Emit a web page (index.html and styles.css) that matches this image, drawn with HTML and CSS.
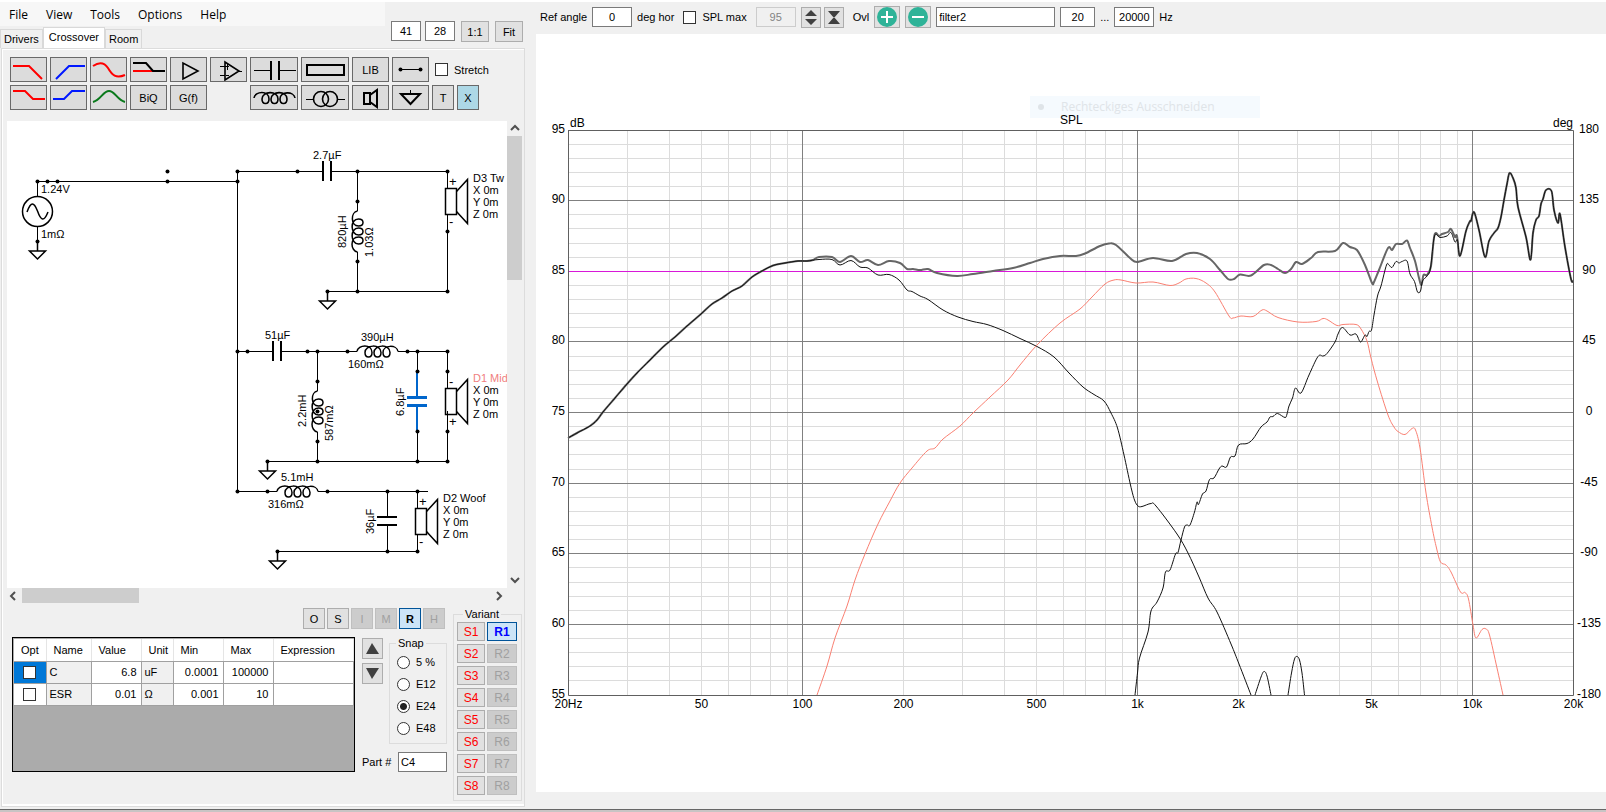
FILE: index.html
```html
<!DOCTYPE html>
<html lang="en">
<head>
    <meta charset="UTF-8">
    <meta name="viewport" content="width=device-width, initial-scale=1.0">
    <title>Crossover</title>
    <link rel="stylesheet" href="styles.css">
</head>
<body>
    <svg class="defs" width="0" height="0">
        <defs>
            <path id="coil" d="M0 0C1 -7 15 -8 15 1C15 7 8 7 8 1C8 -7 24 -8 24 1C24 7 17 7 17 1C17 -7 33 -8 33 1C33 7 26 7 26 1C26 -7 40 -7 41 0"/>
            <path id="ground" d="M0 0V10M-8 10H8L0 18Z"/>
            <g id="speaker">
                <rect x="-2" y="17" width="11" height="26"/>
                <path d="M9 20L20 8V52L9 40"/>
            </g>
        </defs>
    </svg>

    <div class="app">
        <section class="left">
            <header class="top">
                <div class="nav">
                    <nav class="menu">
                        <a href="#">File</a>
                        <a href="#">View</a>
                        <a href="#">Tools</a>
                        <a href="#">Options</a>
                        <a href="#">Help</a>
                    </nav>
                    <div class="tabs">
                        <button class="tab">Drivers</button>
                        <button class="tab active">Crossover</button>
                        <button class="tab">Room</button>
                    </div>
                </div>
                <div class="grid-size">
                    <input type="text" value="41" aria-label="Columns">
                    <input type="text" value="28" aria-label="Rows">
                    <button class="btn">1:1</button>
                    <button class="btn">Fit</button>
                </div>
            </header>

            <main class="page">
                <div class="tools">
                    <button class="tool" aria-label="Low pass"><svg width="35" height="23"><path class="red" d="M2 8H18L31 21"/></svg></button>
                    <button class="tool" aria-label="High pass"><svg width="35" height="23"><path class="blue" d="M5 21L18 8H34"/></svg></button>
                    <button class="tool" aria-label="Phase"><svg width="35" height="23"><path class="red" d="M2 8C8 4 13 4 17 10C21 17 25 21 34 17"/></svg></button>
                    <button class="tool" aria-label="Shelf"><svg width="35" height="23"><path class="red" d="M2 13H22"/><path class="ink2" d="M2 5H15L22 13H34"/></svg></button>
                    <button class="tool" aria-label="Buffer"><svg width="35" height="23"><path class="ink" d="M12 5V21L27 13Z"/></svg></button>
                    <button class="tool" aria-label="Op amp"><svg width="35" height="23"><path class="ink" d="M14 4V22L28 13Z"/><path class="thin" d="M9 8.5H18M9 17.5H14M28 13.5H31M16.5 6V12M15 17.5H18"/></svg></button>
                    <button class="tool" aria-label="Capacitor"><svg width="46" height="23"><path class="thin" d="M3 12.5H20M28 12.5H45"/><path class="ink2" d="M20 3V22M28 3V22"/></svg></button>
                    <button class="tool" aria-label="Resistor"><svg width="46" height="23"><rect class="ink2" x="5" y="7" width="37" height="10"/></svg></button>
                    <button class="tool">LIB</button>
                    <button class="tool" aria-label="Wire"><svg width="35" height="23"><path class="thin" d="M7 11.5H28"/><circle cx="7.5" cy="11.5" r="2"/><circle cx="27.5" cy="11.5" r="2"/></svg></button>
                    <label class="check stretch"><input type="checkbox">Stretch</label>

                    <button class="tool" aria-label="Low shelf"><svg width="35" height="23"><path class="red" d="M2 5H14L22 13H34"/></svg></button>
                    <button class="tool" aria-label="High shelf"><svg width="35" height="23"><path class="blue" d="M2 13H13L21 5H34"/></svg></button>
                    <button class="tool" aria-label="Peak"><svg width="35" height="23"><path class="green" d="M2 16C10 14 12 5 18 5C24 5 26 14 34 16"/></svg></button>
                    <button class="tool">BiQ</button>
                    <button class="tool">G(f)</button>
                    <button class="tool coil-tool" aria-label="Inductor"><svg width="46" height="23"><g class="ink"><use href="#coil" x="3" y="12"/></g></svg></button>
                    <button class="tool" aria-label="Transformer"><svg width="46" height="23"><circle class="ink" cx="19" cy="13" r="7.5"/><circle class="ink" cx="28" cy="13" r="7.5"/><path class="thin" d="M4 13.5H12M35 13.5H43"/></svg></button>
                    <button class="tool" aria-label="Speaker"><svg width="35" height="23"><path class="ink2" d="M11 7H17V18H11ZM17 9L24 4V21L17 16"/></svg></button>
                    <button class="tool" aria-label="Ground"><svg width="35" height="23"><path class="thin" d="M17.5 4V8"/><path class="ink2" d="M8 8H27L17.5 18Z"/></svg></button>
                    <button class="tool">T</button>
                    <button class="tool on">X</button>
                </div>

                <div class="canvas">
                    <svg class="schematic" viewBox="7 121 500 467">
                        <g class="wire">
                            <path d="M37.5 196V181.5H237.5M37.5 227V241.5M237.5 171.5V491.5"/>
                            <path d="M237.5 171.5H323M331 171.5H447.5V188M447.5 214V291.5H327.5M357.5 171.5V211M357.5 252V291.5"/>
                            <path d="M237.5 351.5H273M281 351.5H357M398 351.5H447.5V388M447.5 411V461.5H267.5M317.5 351.5V391M317.5 432V461.5M417.5 351.5V372M417.5 432V461.5"/>
                            <path d="M237.5 491.5H277M318 491.5H428M387.5 491.5V517M387.5 525V551.5M417.5 491.5V508M417.5 534V551.5H277.5"/>
                        </g>
                        <g class="plates">
                            <path d="M323 161V181M331 161V181M273 341V361M281 341V361M377 517H397M377 525H397"/>
                        </g>
                        <g class="selected">
                            <path d="M417 372V397M417 406V431"/>
                            <path class="plate" d="M407 397.5H427M407 405.5H427"/>
                        </g>
                        <g class="part">
                            <circle cx="37.5" cy="211.5" r="15"/>
                            <path d="M27 212C31 201 34 202 37.5 211C41 221 44 222 48 212"/>
                            <use href="#ground" x="37.5" y="241"/>
                            <use href="#ground" x="327.5" y="291"/>
                            <use href="#ground" x="267.5" y="461"/>
                            <use href="#ground" x="277.5" y="551"/>
                            <use href="#coil" transform="translate(357.5 252) rotate(-90)"/>
                            <use href="#coil" transform="translate(317.5 432) rotate(-90)"/>
                            <use href="#coil" x="357" y="351.5"/>
                            <use href="#coil" x="277" y="491.5"/>
                            <use href="#speaker" x="447.5" y="171.5"/>
                            <use href="#speaker" x="447.5" y="371.5"/>
                            <use href="#speaker" x="417.5" y="491.5"/>
                        </g>
                        <g id="dots"></g>
                        <g class="names">
                            <text x="41" y="193">1.24V</text>
                            <text x="41" y="238">1mΩ</text>
                            <text x="313" y="159">2.7µF</text>
                            <text transform="translate(346 248) rotate(-90)">820µH</text>
                            <text transform="translate(373 257) rotate(-90)">1.03Ω</text>
                            <text x="265" y="339">51µF</text>
                            <text x="361" y="341">390µH</text>
                            <text x="348" y="368">160mΩ</text>
                            <text transform="translate(306 427) rotate(-90)">2.2mH</text>
                            <text transform="translate(333 441) rotate(-90)">587mΩ</text>
                            <text transform="translate(404 416) rotate(-90)">6.8µF</text>
                            <text x="281" y="481">5.1mH</text>
                            <text x="268" y="508">316mΩ</text>
                            <text transform="translate(374 534) rotate(-90)">36µF</text>
                            <text x="473" y="182">D3 Tw</text>
                            <text x="473" y="194">X 0m</text>
                            <text x="473" y="206">Y 0m</text>
                            <text x="473" y="218">Z 0m</text>
                            <text class="mid" x="473" y="382">D1 Mid</text>
                            <text x="473" y="394">X 0m</text>
                            <text x="473" y="406">Y 0m</text>
                            <text x="473" y="418">Z 0m</text>
                            <text x="443" y="502">D2 Woof</text>
                            <text x="443" y="514">X 0m</text>
                            <text x="443" y="526">Y 0m</text>
                            <text x="443" y="538">Z 0m</text>
                        </g>
                        <g class="names poles">
                            <text x="449" y="186">+</text>
                            <text x="449" y="226">-</text>
                            <text x="449" y="386">-</text>
                            <text x="449" y="426">+</text>
                            <text x="419" y="506">+</text>
                            <text x="419" y="546">-</text>
                        </g>
                    </svg>
                    <div class="vscroll">
                        <svg width="15" height="15"><path d="M4 9L8 5L12 9"/></svg>
                        <div class="thumb"></div>
                        <svg width="15" height="15"><path d="M4 5L8 9L12 5"/></svg>
                    </div>
                    <div class="hscroll">
                        <svg width="15" height="15"><path d="M8 4L4 8L8 12"/></svg>
                        <div class="thumb"></div>
                        <svg width="15" height="15"><path d="M5 4L9 8L5 12"/></svg>
                    </div>
                </div>

                <div class="bottom">
                    <div class="params">
                        <div class="modes">
                            <button class="btn">O</button>
                            <button class="btn">S</button>
                            <button class="btn" disabled>I</button>
                            <button class="btn" disabled>M</button>
                            <button class="btn on">R</button>
                            <button class="btn" disabled>H</button>
                        </div>
                        <div class="row">
                            <div class="sheet">
                                <table>
                                    <thead>
                                        <tr>
                                            <th class="c-opt">Opt</th>
                                            <th class="c-name">Name</th>
                                            <th class="c-num">Value</th>
                                            <th class="c-opt">Unit</th>
                                            <th class="c-num">Min</th>
                                            <th class="c-num">Max</th>
                                            <th>Expression</th>
                                        </tr>
                                    </thead>
                                    <tbody>
                                        <tr>
                                            <td class="opt current"><input type="checkbox" aria-label="Optimize C"></td>
                                            <td class="fixed">C</td>
                                            <td class="num">6.8</td>
                                            <td class="fixed">uF</td>
                                            <td class="num">0.0001</td>
                                            <td class="num">100000</td>
                                            <td></td>
                                        </tr>
                                        <tr>
                                            <td class="opt"><input type="checkbox" aria-label="Optimize ESR"></td>
                                            <td class="fixed">ESR</td>
                                            <td class="num">0.01</td>
                                            <td class="fixed">Ω</td>
                                            <td class="num">0.001</td>
                                            <td class="num">10</td>
                                            <td></td>
                                        </tr>
                                    </tbody>
                                </table>
                            </div>
                            <div class="side">
                                <div class="side-top">
                                    <div class="steps">
                                        <button class="btn" aria-label="Increase"><svg width="15" height="13"><path d="M7 1L14 12H1Z"/></svg></button>
                                        <button class="btn" aria-label="Decrease"><svg width="15" height="13"><path d="M7 12L14 1H1Z"/></svg></button>
                                    </div>
                                    <fieldset class="snap">
                                        <legend>Snap</legend>
                                        <label><input type="radio" name="snap">5 %</label>
                                        <label><input type="radio" name="snap">E12</label>
                                        <label><input type="radio" name="snap" checked>E24</label>
                                        <label><input type="radio" name="snap">E48</label>
                                    </fieldset>
                                </div>
                                <div class="part-no">
                                    <label for="part">Part #</label>
                                    <input type="text" id="part" value="C4">
                                </div>
                            </div>
                        </div>
                    </div>
                    <fieldset class="variant">
                        <legend>Variant</legend>
                        <button class="btn save">S1</button><button class="btn on recall">R1</button>
                        <button class="btn save">S2</button><button class="btn" disabled>R2</button>
                        <button class="btn save">S3</button><button class="btn" disabled>R3</button>
                        <button class="btn save">S4</button><button class="btn" disabled>R4</button>
                        <button class="btn save">S5</button><button class="btn" disabled>R5</button>
                        <button class="btn save">S6</button><button class="btn" disabled>R6</button>
                        <button class="btn save">S7</button><button class="btn" disabled>R7</button>
                        <button class="btn save">S8</button><button class="btn" disabled>R8</button>
                    </fieldset>
                </div>
            </main>
        </section>

        <section class="right">
            <div class="plot-bar">
                <label for="angle">Ref angle</label>
                <input type="text" id="angle" class="w-num" value="0">
                <span class="unit">deg hor</span>
                <label class="check"><input type="checkbox">SPL max</label>
                <input type="text" class="w-num" value="95" aria-label="SPL max value" disabled>
                <div class="pair">
                    <button class="btn" aria-label="Expand"><svg width="18" height="19"><path d="M9 2L15 8H3ZM9 17L15 11H3Z"/></svg></button>
                    <button class="btn" aria-label="Compress"><svg width="18" height="19"><path d="M9 10L15 3H3ZM9 9L15 16H3Z"/></svg></button>
                </div>
                <span>Ovl</span>
                <div class="overlay">
                    <button class="btn" aria-label="Add overlay"><svg width="24" height="20"><circle cx="12" cy="10" r="10"/><path d="M6 10H18M12 4V16"/></svg></button>
                    <button class="btn" aria-label="Remove overlay"><svg width="24" height="20"><circle cx="12" cy="10" r="10"/><path d="M6 10H18"/></svg></button>
                </div>
                <input type="text" class="w-name" value="filter2" aria-label="Overlay name">
                <input type="text" class="w-from" value="20" aria-label="From frequency">
                <span>...</span>
                <input type="text" class="w-num" value="20000" aria-label="To frequency">
                <span>Hz</span>
            </div>
            <div class="plot">
                <svg id="spl" viewBox="536 34 1070 758">
                    <g class="ghost">
                        <rect x="1030" y="96" width="230" height="22"/>
                        <circle cx="1041" cy="107" r="3"/>
                        <text x="1061" y="111">Rechteckiges Ausschneiden</text>
                    </g>
                    <g id="grid"></g>
                    <path class="target" d="M569 271.5H1573"/>
                    <g id="curves"></g>
                    <path class="frame" d="M568.5 130V695.5H1573.5V130.5H568.5"/>
                    <g id="labels">
                        <text x="570" y="127">dB</text>
                        <text x="1060" y="124">SPL</text>
                        <text x="1553" y="127">deg</text>
                    </g>
                </svg>
            </div>
        </section>
    </div>
    <footer class="strip"></footer>

    <script>
        const NS = "http://www.w3.org/2000/svg";

        function add(parent, tag, attrs, text) {
            let el = document.createElementNS(NS, tag);
            for (let key in attrs) {
                el.setAttribute(key, attrs[key]);
            }
            if (text !== undefined) {
                el.textContent = text;
            }
            parent.appendChild(el);
        }

        // wire nodes
        let nodes = [
            [37.5, 181.5], [47.5, 181.5], [57.5, 181.5], [167.5, 171.5], [167.5, 181.5], [237.5, 171.5], [237.5, 181.5],
            [37.5, 241.5], [297.5, 171.5], [357.5, 171.5], [447.5, 171.5], [357.5, 201.5], [357.5, 261.5], [447.5, 231.5],
            [327.5, 291.5], [357.5, 291.5], [447.5, 291.5], [237.5, 351.5], [247.5, 351.5], [307.5, 351.5], [317.5, 351.5],
            [347.5, 351.5], [407.5, 351.5], [417.5, 351.5], [447.5, 351.5], [317.5, 381.5], [317.5, 411.5], [317.5, 441.5],
            [417.5, 371.5], [417.5, 431.5], [447.5, 371.5], [447.5, 431.5], [267.5, 461.5], [317.5, 461.5], [417.5, 461.5],
            [447.5, 461.5], [237.5, 491.5], [267.5, 491.5], [327.5, 491.5], [387.5, 491.5], [417.5, 491.5],
            [277.5, 551.5], [387.5, 551.5], [417.5, 551.5]
        ];
        nodes.forEach(n => add(document.getElementById("dots"), "circle", { cx: n[0], cy: n[1], r: 2 }));

        // log frequency axis and dB axis
        let xOf = f => Math.floor(802.5 + 335 * Math.log10(f / 100)) + 0.5;
        let yOf = db => Math.floor(130 + (95 - db) * 14.125) + 0.5;
        let grid = document.getElementById("grid");
        let labels = document.getElementById("labels");
        let minor = "", major = "";

        for (let db = 94; db > 55; db--) {
            let line = "M568 " + yOf(db) + "H1573";
            if (db % 5 === 0) major += line; else minor += line;
        }
        for (let decade of [10, 100, 1000, 10000]) {
            for (let n = 1; n < 10; n++) {
                let f = n * decade;
                if (f <= 20 || f >= 20000) continue;
                let line = "M" + xOf(f) + " 130V695";
                if (n === 1) major += line; else minor += line;
            }
        }
        add(grid, "path", { class: "minor", d: minor });
        add(grid, "path", { class: "major", d: major });

        for (let db = 95; db >= 55; db -= 5) {
            add(labels, "text", { x: 565, y: yOf(db) + 2, class: "end" }, db);
            add(labels, "text", { x: 1589, y: yOf(db) + 2, class: "mid" }, (db - 75) * 9);
        }
        let ticks = [[20, "20Hz"], [50, "50"], [100, "100"], [200, "200"], [500, "500"], [1000, "1k"], [2000, "2k"], [5000, "5k"], [10000, "10k"], [20000, "20k"]];
        ticks.forEach(t => add(labels, "text", { x: xOf(t[0]), y: 708, class: "mid" }, t[1]));

        // measured curves, plot coordinates
        let low = [568,438, 577,433, 590,426, 597,420, 603,412, 615,398, 627,384, 637,373, 650,360, 663,347, 675,337, 687,326, 701,314, 712,304, 722,298, 732,291, 742,286, 752,277, 762,271, 773,265.5, 785,263, 798,261, 807,261];
        let high = [1460,256, 1466,231, 1470,221, 1471,221, 1474,212, 1479,230, 1485,257, 1489,241, 1494,233, 1498,228, 1501,217, 1504,200, 1507,184, 1509.5,173, 1513,178, 1516,188, 1518,207, 1526,237, 1530.5,260, 1533,233, 1536,220, 1539,216, 1541,204, 1543,199, 1546,190, 1551.5,191, 1554,210, 1558,223, 1560,214, 1565,247, 1571,279, 1573,281];
        let curves = {
            sum: low.concat([813,260, 819,257, 832,257, 840,262, 851,256, 860,262, 868,260, 878,265, 889,261, 900,263, 907,269, 913,269, 920,270, 928,269, 937,273, 957,276, 973,274, 993,271, 1013,268, 1030,263, 1043,259, 1060,256, 1076,256, 1085,253.5, 1100,246, 1109,243.5, 1116,245, 1130,258, 1137,262, 1153,258, 1172,261, 1186,254, 1197,253, 1210,259, 1220,270, 1228,279, 1234,279, 1240,274.5, 1251,275.5, 1264,265, 1271,265, 1278,269, 1285,273, 1291,269, 1296,262, 1302,264, 1311,258, 1318,252, 1335,251, 1343,243, 1350,247, 1357,250, 1365,265, 1372,283, 1374,282, 1379,270, 1388,248, 1392,250, 1396,244, 1402,244, 1407,240.5, 1410,248, 1415,261, 1419,278, 1421.5,285, 1423.5,275, 1427,275, 1431,266, 1434.5,235, 1439,236, 1442,234, 1448,232, 1451,229, 1455,237, 1457,236]).concat(high),
            woofer: low.concat([819,259.5, 832,259.5, 840,265, 851,260.5, 860,267, 868,268, 878,275, 889,274.5, 899,280, 907,290, 912,291.5, 920,296, 928,299.5, 943,310, 958,317, 973,321.5, 987,324.5, 1003,330.5, 1020,338.5, 1037,346.5, 1054,357, 1069,373, 1083,387, 1094,394.5, 1104,401, 1111,413, 1117.5,428, 1124,455, 1130.5,485, 1134.5,500, 1138,506, 1142,506.5, 1151,503.5, 1156,506, 1177,534, 1188,553, 1199,577, 1208,598, 1217,612, 1231,644, 1239,664, 1251,695]),
            mid: [817,695, 827,666, 835,638, 847,606, 855,580, 865,554, 878,524, 890,501, 900,483, 912,468, 927,451, 935,448, 943,439, 960,426, 973,413, 990,397, 1008,380, 1020,365, 1037,345, 1060,323, 1080,309, 1092,297, 1105,284, 1114,280, 1121,280, 1136,283, 1153,282, 1170,285.5, 1179,283, 1186,279, 1196,278.5, 1206,283, 1215,292, 1229,316, 1233,318, 1241,316, 1253,316.5, 1262,310, 1267,311, 1278,317.5, 1298,322, 1316,321.5, 1323,318.5, 1328,320, 1337,325.5, 1343,324.5, 1356,324.5, 1361,329, 1367,341, 1371,358, 1377.5,382, 1388,415, 1394,427, 1398,431.5, 1405,434.5, 1412,428.5, 1415.5,430, 1420,448, 1426,493, 1432,527, 1436.5,548, 1440.5,562, 1446,565, 1451,572, 1460.5,592, 1465,592.5, 1468.5,599, 1473,625, 1476,638, 1482,629.5, 1486,629, 1489.5,635, 1497,668, 1503,695],
            tweeter: [1135,695, 1137.5,673, 1139.5,658, 1148,632, 1151,611, 1157,602, 1163,588, 1165.5,572, 1170,570, 1175.5,554, 1178,552.5, 1181,540, 1184.5,527, 1187,525, 1190,525, 1194.5,512, 1197,502, 1198.5,504.5, 1202.5,494, 1206,491, 1209.5,479.5, 1214,478, 1219,469, 1222,466, 1226.5,467, 1230.5,457, 1235,456, 1238.5,445, 1247,443.5, 1253,439, 1261,427, 1267,422, 1270,417, 1273,416.5, 1277.5,413.5, 1285,417.5, 1287,414, 1289,406, 1292.5,398, 1295.5,388, 1301,393, 1309,375, 1318,356.5, 1323,356, 1327,353.5, 1335,342, 1338,334, 1342.5,327.5, 1350,335, 1356,334, 1360.5,342, 1365,335, 1367,336.5, 1369,331.5, 1371.5,330, 1374,315, 1377.5,296, 1381,286, 1386.5,265, 1389,265, 1392,267.5, 1396,261.5, 1399,263, 1402,261.5, 1407,261, 1410,274, 1414.5,281.5, 1417.5,292, 1420.5,291, 1422.5,281, 1427,276, 1430.5,268, 1434.5,236, 1440,237.5, 1447,236, 1451,232.5, 1455,242, 1457.5,240].concat(high),
            bump1: [1255,695, 1261,677, 1264,671.5, 1267,676, 1271,695],
            bump2: [1288,695, 1291.5,673, 1294.5,659, 1297,656.5, 1299.5,660, 1302,673, 1304.5,695]
        };

        function smooth(p) {
            let d = "M" + p[0] + " " + p[1];
            for (let i = 0; i + 3 < p.length; i += 2) {
                let a = Math.max(i - 2, 0), b = Math.min(i + 4, p.length - 2);
                d += "C" + [
                    p[i] + (p[i + 2] - p[a]) / 6, p[i + 1] + (p[i + 3] - p[a + 1]) / 6,
                    p[i + 2] - (p[b] - p[i]) / 6, p[i + 3] - (p[b + 1] - p[i + 1]) / 6,
                    p[i + 2], p[i + 3]
                ].join(" ");
            }
            return d;
        }
        for (let name in curves) {
            add(document.getElementById("curves"), "path", { class: "curve " + name, d: smooth(curves[name]) });
        }
    </script>
</body>
</html>
```
FILE: styles.css
```css
* {
    box-sizing: border-box;
}
body {
    margin: 0;
    min-height: 100vh;
    display: flex;
    flex-direction: column;
    background: #f0f0f0;
    border-top: 2px solid #fff;
    font-family: "Liberation Sans", Arial, sans-serif;
    font-size: 11px;
    color: #000;
}
.defs {
    position: absolute;
}
button, input, legend {
    font: inherit;
    color: inherit;
}
button, input[type="text"] {
    margin: 0;
    padding: 0;
}
input[type="text"] {
    height: 20px;
    background: #fff;
    border: 1px solid #7a7a7a;
    text-align: center;
}
input[type="text"]:disabled {
    color: #838383;
    background: #f0f0f0;
    border-color: #ccc;
}
input[type="checkbox"] {
    appearance: none;
    width: 13px;
    height: 13px;
    margin: 0;
    background: #fff;
    border: 1px solid #333;
}
.check {
    display: flex;
    align-items: center;
    gap: 6px;
}
.app {
    display: flex;
    flex: 1;
}

/* left pane */
.left {
    flex: 0 0 525px;
    display: flex;
    flex-direction: column;
}
.top {
    display: flex;
    justify-content: space-between;
    height: 46px;
}
.nav {
    flex: 0 0 385px;
    display: flex;
    flex-direction: column;
    justify-content: space-between;
}
.menu {
    display: flex;
    align-items: center;
    gap: 18px;
    height: 24px;
    padding-left: 9px;
    background: #f7f7f7;
    font-family: "Open Sans", sans-serif;
    font-size: 12px;
}
.menu a {
    color: #000;
    text-decoration: none;
}
.tabs {
    display: flex;
    align-items: flex-end;
}
.tab {
    height: 19px;
    padding: 0 3px;
    background: #f0f0f0;
    border: 1px solid #d9d9d9;
    border-bottom: 0;
}
.tab.active {
    height: 21px;
    padding: 0 5px 2px;
    background: #fff;
}
.grid-size {
    display: flex;
    gap: 4px;
    align-items: flex-start;
    padding: 19px 2px 0 0;
}
.grid-size input {
    width: 30px;
}
.grid-size .btn {
    width: 28px;
    height: 21px;
    margin-left: 2px;
}
.btn {
    display: flex;
    align-items: center;
    justify-content: center;
    background: #e1e1e1;
    border: 1px solid #adadad;
}
.btn:disabled {
    color: #a0a0a0;
    background: #ccc;
    border-color: #bfbfbf;
}
.btn.on {
    background: #cce4f7;
    border-color: #005499;
    font-weight: bold;
}
.page {
    flex: 1;
    margin: 0 0 2px 1px;
    padding: 8px 2px 0 5px;
    border: 1px solid #dcdcdc;
    box-shadow: inset 1px 1px #fff, inset 0 -2px #fff;
}
.tools {
    display: grid;
    grid-template-columns: repeat(6, 37px) repeat(2, 48px) repeat(2, 37px) 22px 22px 1fr;
    grid-auto-rows: 25px;
    gap: 3px;
    padding-left: 3px;
}
.tool {
    display: flex;
    align-items: center;
    justify-content: center;
    background: #dcdcdc;
    border: 1px solid #696969;
}
.tool.on {
    background: #add8e6;
}
.tool svg {
    fill: none;
}
.tool circle {
    fill: #000;
}
.tool circle.ink {
    fill: none;
}
.stretch {
    grid-column: 11 / -1;
    padding-left: 3px;
}
.coil-tool {
    grid-column: 7;
}
.red, .blue, .green, .ink2 {
    stroke-width: 2;
}
.red {
    stroke: #f00;
}
.blue {
    stroke: #0018ff;
}
.green {
    stroke: #0a7a1c;
}
.ink, .ink2, .thin {
    stroke: #000;
}
.ink {
    stroke-width: 1.6;
}

/* schematic */
.canvas {
    display: grid;
    grid-template-columns: 1fr 15px;
    margin-top: 11px;
}
.schematic {
    display: block;
    width: 100%;
    background: #fff;
    fill: none;
    stroke: #000;
}
.plates {
    stroke-width: 2;
}
.part {
    stroke-width: 1.5;
}
.selected {
    stroke: #0066cc;
    stroke-width: 2;
}
.plate {
    stroke-width: 3;
}
#dots {
    fill: #000;
    stroke: none;
}
.names {
    fill: #000;
    stroke: none;
}
.names .mid {
    fill: #f08080;
}
.poles {
    font-size: 13px;
}
.vscroll, .hscroll {
    display: flex;
    justify-content: space-between;
    fill: none;
    stroke: #505050;
    stroke-width: 2;
}
.vscroll {
    flex-direction: column;
}
.thumb {
    background: #cdcdcd;
}
.vscroll .thumb {
    height: 144px;
    margin-bottom: auto;
}
.hscroll .thumb {
    width: 117px;
    margin-right: auto;
}

/* part parameters */
.bottom {
    display: flex;
    justify-content: space-between;
    padding: 5px 0 0 5px;
}
.modes {
    display: flex;
    justify-content: flex-end;
    gap: 2px;
    padding-right: 2px;
}
.modes .btn {
    width: 22px;
    height: 21px;
}
.row {
    display: flex;
    gap: 7px;
    margin-top: 8px;
}
.sheet {
    width: 343px;
    height: 135px;
    padding: 1px 0 0 1px;
    background: #ababab;
    border: 1px solid #000;
}
table {
    width: 100%;
    table-layout: fixed;
    border-collapse: collapse;
    background: #fff;
}
th, td {
    height: 22px;
    padding: 0 4px 0 3px;
    border-right: 1px solid #a0a0a0;
    border-bottom: 1px solid #a0a0a0;
}
th {
    padding: 0 0 0 7px;
    border-right-color: #e5e5e5;
    font-weight: normal;
    text-align: left;
}
.c-opt {
    width: 32px;
}
.c-name {
    width: 45px;
}
.c-num {
    width: 50px;
}
.fixed {
    background: #f0f0f0;
}
.num {
    text-align: right;
}
td.opt {
    padding: 0;
    line-height: 0;
    text-align: center;
}
.current {
    background: #0078d7;
}
.side {
    display: flex;
    flex-direction: column;
    justify-content: space-between;
    width: 85px;
}
.side-top {
    display: flex;
    justify-content: space-between;
}
.steps {
    display: flex;
    flex-direction: column;
    gap: 4px;
    padding-top: 1px;
    fill: #404040;
}
.steps .btn {
    width: 21px;
    height: 21px;
}
fieldset {
    margin: 0;
    padding: 0;
    border: 1px solid #dcdcdc;
}
legend {
    height: 12px;
    margin-left: 6px;
    padding: 0 2px;
    line-height: 12px;
}
.snap {
    width: 58px;
    height: 107px;
    padding-top: 2px;
}
.snap label {
    display: flex;
    align-items: center;
    gap: 6px;
    height: 22px;
    padding-left: 7px;
}
.snap input {
    appearance: none;
    width: 13px;
    height: 13px;
    margin: 0;
    background: #fff;
    border: 1px solid #333;
    border-radius: 50%;
}
.snap input:checked {
    background: radial-gradient(circle, #222 3px, #fff 4px);
}
.part-no {
    display: flex;
    align-items: center;
    justify-content: space-between;
}
.part-no input {
    width: 49px;
    padding-left: 2px;
    text-align: left;
}
.variant {
    display: grid;
    grid-template-columns: 28px 30px;
    grid-auto-rows: 19px;
    gap: 3px 2px;
    width: 69px;
    height: 193px;
    padding: 2px 3px;
    font-size: 12px;
}
.variant legend {
    font-size: 11px;
}
.save {
    color: #f00;
}
.recall {
    color: #00f;
}

/* right pane */
.right {
    flex: 1;
    min-width: 0;
    padding-left: 11px;
}
.plot-bar {
    display: flex;
    align-items: center;
    gap: 5px;
    height: 32px;
    padding: 0 0 2px 4px;
}
.unit {
    margin-right: 4px;
}
.plot-bar .check {
    margin-right: 4px;
}
.w-num {
    width: 40px;
}
.w-from {
    width: 35px;
}
.w-name {
    width: 119px;
}
.plot-bar .w-name {
    padding-left: 2px;
    text-align: left;
}
.pair, .overlay {
    display: flex;
    gap: 3px;
    margin-right: 4px;
}
.pair {
    fill: #404040;
}
.pair .btn {
    width: 20px;
    height: 21px;
}
.overlay {
    gap: 5px;
    margin: 0;
    fill: #2eb398;
    stroke-width: 2;
}
.overlay path {
    stroke: #fff;
}
.overlay .btn {
    width: 26px;
    height: 22px;
}
.plot {
    background: #fff;
}
#spl {
    display: block;
    width: 100%;
    fill: none;
}
.minor {
    stroke: #dcdcdc;
}
.major {
    stroke: #808080;
}
.frame {
    stroke: #606060;
}
.target {
    stroke: #d818d8;
}
.curve {
    stroke: #111;
    stroke-linejoin: round;
}
.curve.sum {
    stroke: #666;
    stroke-width: 2;
}
.curve.mid {
    stroke: #fa8072;
}
#labels {
    fill: #000;
    font-size: 12px;
}
#labels .end {
    text-anchor: end;
}
#labels .mid {
    text-anchor: middle;
}
.ghost {
    fill: #dfe4e8;
    font-family: "Open Sans", sans-serif;
    font-size: 12px;
}
.ghost rect {
    fill: #f5fafe;
}
.strip {
    height: 3px;
    background: #c8c4c4;
    border-top: 1px solid #666;
}
```
